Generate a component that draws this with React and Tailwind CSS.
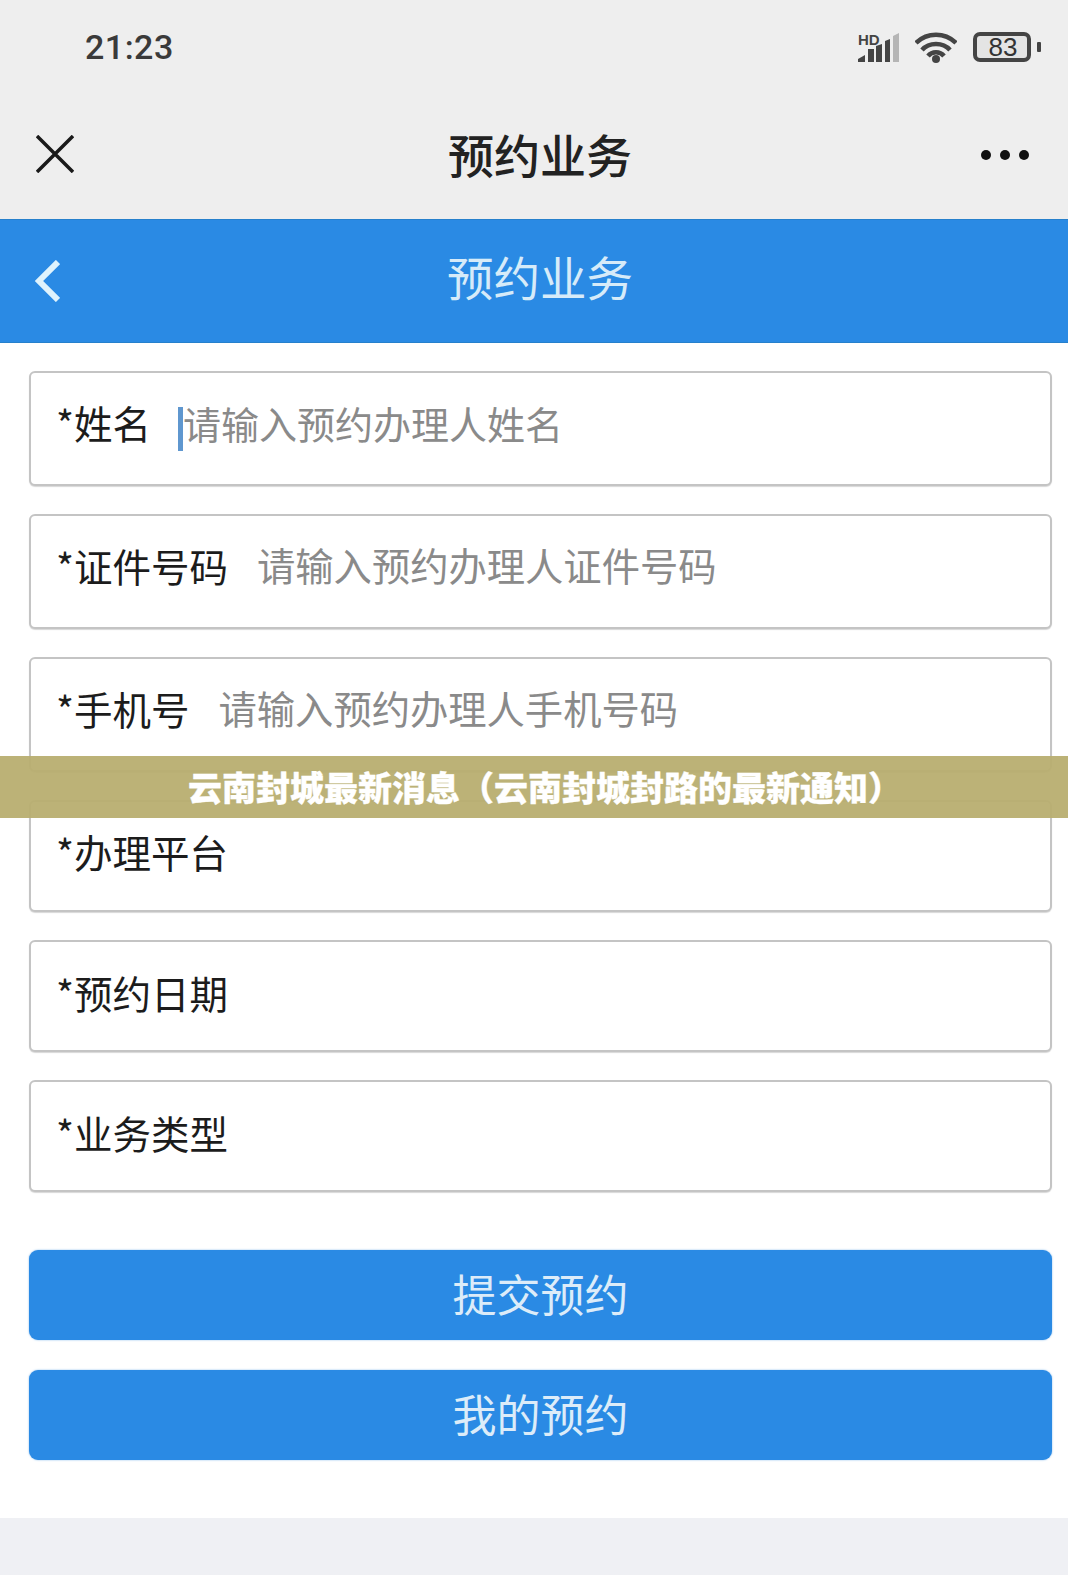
import React from 'react';

const fields = [
  { label: '*姓名', hint: '请输入预约办理人姓名', caret: true, h: 'h-[115px]', pb: 'pb-[12px]' },
  { label: '*证件号码', hint: '请输入预约办理人证件号码', h: 'h-[115px]', pb: 'pb-[12px]' },
  { label: '*手机号', hint: '请输入预约办理人手机号码', h: 'h-[115px]', pb: 'pb-[12px]' },
  { label: '*办理平台', h: 'h-[112px]', pb: 'pb-[10px]' },
  { label: '*预约日期', h: 'h-[112px]', pb: 'pb-[8px]' },
  { label: '*业务类型', h: 'h-[112px]', pb: 'pb-[8px]' },
];

const Signal = () => (
  <svg width="43" height="31" viewBox="0 0 43 31" className="mr-[16px] overflow-visible">
    <text x="2" y="13" fontSize="15" fontWeight="700" fill="#444" fontFamily="Liberation Sans">HD</text>
    <path d="M2 30v-3l7-4v7zM12 30V17h6v13zM20 30V14l6-2v18zM29 30V9l5-2v23z" fill="#444" />
    <path d="M37 4l6-3v29h-6z" fill="#b5b5b5" />
  </svg>
);

const Wifi = () => (
  <svg width="42" height="31" viewBox="0 0 42 31" fill="none" stroke="#444" strokeWidth="4.5" className="mr-[16px]">
    <path d="M1 11C12 0 30 0 41 11" />
    <path d="M7 18C14 10 28 10 35 18" />
    <path d="M13 24C17 19 25 19 29 24" />
    <circle cx="21" cy="27" r="4" fill="#444" stroke="none" />
  </svg>
);

const Battery = () => (
  <div className="flex items-center gap-[6px]">
    <div className="w-[58px] h-[30px] rounded-[7px] border-[4px] border-[#444] flex items-center justify-center pl-[2px] text-[26px] leading-none text-[#333] font-['Liberation_Sans',sans-serif] bg-[#e4e4e4]">
      83
    </div>
    <div className="w-[4px] h-[10px] bg-[#444] rounded-[1px]" />
  </div>
);

const Field = ({ label, hint, caret, h, pb }) => (
  <div className={`${h} border-[2px] border-[#c4c4c4] rounded-[6px] pl-[25px] pr-4 flex items-center gap-[29px] bg-white shadow-[0_1px_1px_#d8d8d8]`}>
    <span className={`text-[38.5px] leading-none text-[#1c1c1c] ${pb}`}>{label}</span>
    {hint && (
      <span className={`relative leading-none text-[#8a8a8a] ${pb} ${caret ? 'ml-[3px] text-[38px]' : 'text-[38.3px]'}`}>
        {caret && <span className="absolute -left-[5px] top-[3px] w-[5px] h-[44px] bg-[#5f97cf]" />}
        {hint}
      </span>
    )}
  </div>
);

const BlueButton = ({ children }) => (
  <button className="w-full h-[90px] rounded-[9px] bg-[#2a8ae4] text-[#dcecf9] text-[44px] leading-none pb-[5px] shadow-[0_0_2px_#7db6ea]">
    {children}
  </button>
);

export default function App() {
  return (
    <div className="relative w-[1068px] h-[1575px] bg-white overflow-hidden font-['Noto_Sans_CJK_SC','Noto_Sans',sans-serif]">
      <div className="h-[219px] bg-[#eeeeee]">
        <div className="h-[100px] pl-[85px] pr-[27px] flex items-center justify-between">
          <span className="text-[34px] font-medium text-[#3a3a3a] font-['Roboto',sans-serif] pb-[6px] tracking-[0.5px]">21:23</span>
          <div className="flex items-center pb-[6px]">
            <Signal />
            <Wifi />
            <Battery />
          </div>
        </div>
        <div className="h-[112px] px-[36px] flex items-center justify-between relative">
          <svg width="38" height="38" viewBox="0 0 38 38" stroke="#1a1a1a" strokeWidth="3.5" className="mb-[4px]">
            <path d="M1 1l36 36M37 1L1 37" />
          </svg>
          <span className="absolute left-[12px] right-0 text-center text-[46px] font-medium leading-none text-[#222] pb-[6px]">预约业务</span>
          <div className="flex gap-[9px] mr-[3px] mb-[3px]">
            <span className="w-[10px] h-[10px] rounded-full bg-[#111]" />
            <span className="w-[10px] h-[10px] rounded-full bg-[#111]" />
            <span className="w-[10px] h-[10px] rounded-full bg-[#111]" />
          </div>
        </div>
      </div>

      <div className="h-[124px] bg-[#2a8ae4] border-y border-[#2680cc] flex items-center relative pl-[34px]">
        <svg width="26" height="42" viewBox="0 0 26 42" fill="none" stroke="#dff3fd" strokeWidth="6">
          <path d="M24 2L5 21l19 19" />
        </svg>
        <span className="absolute left-[12px] right-0 text-center text-[46.5px] leading-none text-[#d6ebf9] pb-[10px]">预约业务</span>
      </div>

      <div className="h-[1175px] pl-[29px] pr-[16px] pt-[28px]">
        <div className="flex flex-col gap-[28px]">
          {fields.map((f) => (
            <Field key={f.label} {...f} />
          ))}
        </div>
        <div className="mt-[58px] flex flex-col gap-[30px]">
          <BlueButton>提交预约</BlueButton>
          <BlueButton>我的预约</BlueButton>
        </div>
      </div>

      <div className="h-[57px] bg-[#eff0f4]" />

      <div className="absolute left-0 right-0 top-[756px] h-[62px] bg-[#b8ae70]/95 flex items-center justify-center pl-[22px] text-[34px] font-black text-white leading-none whitespace-nowrap [-webkit-text-stroke:0.3px_white]">
        云南封城最新消息（云南封城封路的最新通知）
      </div>
    </div>
  );
}
